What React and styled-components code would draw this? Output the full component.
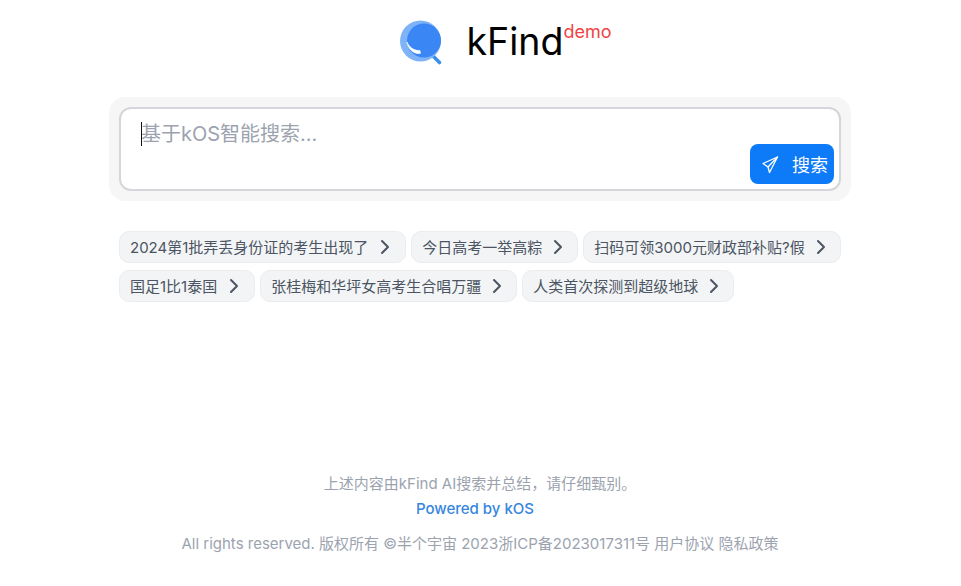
import styled, { createGlobalStyle } from 'styled-components';
import { ChevronRight } from 'lucide-react';

const GlobalStyle = createGlobalStyle`
    body {
        margin: 0;
        background: #fff;
        font-family: Inter, "Noto Sans CJK SC", sans-serif;
    }
`;

const topics = [
    ['2024第1批弄丢身份证的考生出现了', '今日高考一举高粽', '扫码可领3000元财政部补贴?假'],
    ['国足1比1泰国', '张桂梅和华坪女高考生合唱万疆', '人类首次探测到超级地球'],
];

const LogoIcon = () => (
    <svg width="46" height="46" viewBox="0 0 46 46" fill="none">
        <path d="M31 34 L39.5 42.5" stroke="#3b8fee" strokeWidth="3.6" strokeLinecap="round" />
        <circle cx="20.5" cy="21" r="20.5" fill="#7fb3f7" />
        <circle cx="24" cy="20.5" r="17" fill="#3a86f5" />
        <path d="M7 22 C9 27 14 31 20 30.5 L20.5 33.5 C14 34.5 8 29 7 22 Z" fill="#fff" stroke="#fff" strokeWidth="0.6" strokeLinejoin="round" />
    </svg>
);

const SendIcon = () => (
    <svg width="20" height="20" viewBox="0 0 20 20" fill="none" stroke="#fff" strokeWidth="1.3" strokeLinejoin="round" strokeLinecap="round">
        <path d="M17.5 3 L3 9.5 L8 13 L9.5 18.5 Z" />
        <path d="M17.5 3 L8 13" />
    </svg>
);

const App = () => (
    <Page>
        <GlobalStyle />
        <Header>
            <LogoIcon />
            <Title>kFind</Title>
            <Demo>demo</Demo>
        </Header>
        <SearchShell>
            <SearchBox>
                <Caret />
                <Input placeholder="基于kOS智能搜索..." />
                <SearchButton>
                    <SendIcon />
                    <span>搜索</span>
                </SearchButton>
            </SearchBox>
        </SearchShell>
        <Topics>
            {topics.map((row, index) => (
                <TopicRow key={index}>
                    {row.map((topic) => (
                        <Topic key={topic}>
                            {topic}
                            <ChevronRight size={24} strokeWidth={2} color="#4b5563" />
                        </Topic>
                    ))}
                </TopicRow>
            ))}
        </Topics>
        <Footer>
            <Note>上述内容由kFind AI搜索并总结，请仔细甄别。</Note>
            <Powered>Powered by kOS</Powered>
            <Rights>All rights reserved. 版权所有 ©半个宇宙 2023浙ICP备2023017311号 用户协议 隐私政策</Rights>
        </Footer>
    </Page>
);

const Page = styled.div`
    width: 960px;
    height: 586px;
    display: flex;
    flex-direction: column;
    align-items: center;
    overflow: hidden;
`;

const Header = styled.div`
    display: flex;
    align-items: flex-start;
    height: 97px;
    margin-left: 51px;
    padding-top: 20px;
    box-sizing: border-box;
`;

const Title = styled.h1`
    margin: 0 0 0 21px;
    font-size: 37.5px;
    line-height: 44px;
    font-weight: 400;
    color: #000;
`;

const Demo = styled.span`
    font-size: 18px;
    line-height: 24px;
    color: #ef4444;
`;

const SearchShell = styled.div`
    width: 742px;
    height: 104px;
    padding: 10px;
    box-sizing: border-box;
    background: #f6f6f6;
    border-radius: 16px;
`;

const SearchBox = styled.div`
    position: relative;
    height: 84px;
    box-sizing: border-box;
    background: #fff;
    border: 2px solid #d4d6da;
    border-radius: 12px;
    padding: 11px 20px;
`;

const Caret = styled.i`
    position: absolute;
    left: 20px;
    top: 13px;
    width: 1px;
    height: 24px;
    background: #111;
`;

const Input = styled.textarea`
    display: block;
    width: 100%;
    height: 28px;
    padding: 0;
    border: none;
    outline: none;
    resize: none;
    font-family: inherit;
    font-size: 20px;
    line-height: 28px;

    &::placeholder {
        color: #9ca3af;
        opacity: 1;
    }
`;

const SearchButton = styled.button`
    position: absolute;
    right: 5px;
    bottom: 5px;
    width: 84px;
    height: 40px;
    padding: 0 6px 0 10px;
    box-sizing: border-box;
    display: flex;
    align-items: center;
    justify-content: space-between;
    border: none;
    border-radius: 8px;
    background: #0d7bf8;
    color: #fff;
    font-family: inherit;
    font-size: 18px;
`;

const Topics = styled.div`
    width: 722px;
    margin-top: 30px;
    display: flex;
    flex-direction: column;
    gap: 7px;
`;

const TopicRow = styled.div`
    display: flex;
    gap: 5px;
`;

const Topic = styled.div`
    height: 32px;
    padding: 0 7px 2px 10px;
    box-sizing: border-box;
    display: flex;
    align-items: center;
    gap: 4px;
    background: #f3f4f5;
    border: 1px solid #ebecee;
    border-radius: 10px;
    color: #4b5563;
    font-size: 15px;
    white-space: nowrap;

    &:first-child {
        padding-right: 8px;
        gap: 5px;
    }

    svg {
        margin-bottom: -2px;
    }
`;

const Footer = styled.div`
    margin-top: auto;
    padding-bottom: 32px;
    display: flex;
    flex-direction: column;
    align-items: center;
    font-size: 15px;
    line-height: 20px;
`;

const Note = styled.div`
    color: #9ca3af;
`;

const Powered = styled.div`
    margin: 5px 10px 0 0;
    color: #3586e0;
    font-weight: 500;
`;

const Rights = styled.div`
    margin-top: 15px;
    color: #9ca3af;
`;

export default App;
